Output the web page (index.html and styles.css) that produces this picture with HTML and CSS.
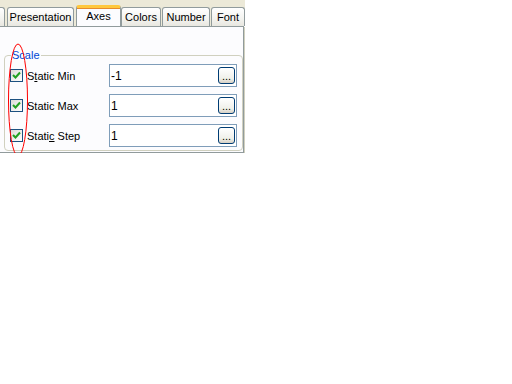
FILE: index.html
```html
<!DOCTYPE html>
<html lang="en">
<head>
    <meta charset="UTF-8">
    <title>Axes Properties</title>
    <link rel="stylesheet" href="styles.css">
</head>
<body>
    <div class="dialog">
        <div class="tab-strip">
            <div class="tab tab-cut"></div>
            <div class="tab tab-presentation">Presentation</div>
            <div class="tab tab-axes selected">Axes</div>
            <div class="tab tab-colors">Colors</div>
            <div class="tab tab-number">Number</div>
            <div class="tab tab-font">Font</div>
        </div>

        <div class="panel">
            <fieldset class="group">
                <legend>Scale</legend>

                <div class="row">
                    <span class="check"><svg width="11" height="11" viewBox="0 0 11 11"><path d="M2 5 L4.5 7.5 L9 2.5" fill="none" stroke="#21a121" stroke-width="2"/></svg></span>
                    <label>S<u>t</u>atic Min</label>
                    <div class="field"><span class="value">-1</span><button class="dots">...</button></div>
                </div>

                <div class="row">
                    <span class="check"><svg width="11" height="11" viewBox="0 0 11 11"><path d="M2 5 L4.5 7.5 L9 2.5" fill="none" stroke="#21a121" stroke-width="2"/></svg></span>
                    <label>Static Max</label>
                    <div class="field"><span class="value">1</span><button class="dots">...</button></div>
                </div>

                <div class="row">
                    <span class="check"><svg width="11" height="11" viewBox="0 0 11 11"><path d="M2 5 L4.5 7.5 L9 2.5" fill="none" stroke="#21a121" stroke-width="2"/></svg></span>
                    <label>Stati<u>c</u> Step</label>
                    <div class="field"><span class="value">1</span><button class="dots">...</button></div>
                </div>
            </fieldset>
        </div>

        <!-- red annotation ring drawn over the checkboxes -->
        <svg class="ring" width="22" height="114" viewBox="0 0 22 114">
            <ellipse cx="11" cy="57" rx="9.5" ry="56" fill="none" stroke="#ff0000" stroke-width="1"/>
        </svg>
    </div>
</body>
</html>
```

FILE: styles.css
```css
body {
    margin: 0;
    background: #fff;
    font-family: 'Liberation Sans', Arial, sans-serif;
    font-size: 11px;
    color: #000;
}

.dialog {
    position: relative;
    width: 245px;
}

.tab-strip {
    display: flex;
    align-items: flex-end;
    height: 26px;
    background: #ece9d8;
    overflow: hidden;
}

.tab {
    box-sizing: border-box;
    height: 19px;
    border: 1px solid #919b9c;
    border-bottom: none;
    border-radius: 3px 3px 0 0;
    background: linear-gradient(#ffffff, #f3f3ef 60%, #e8e7e0);
    text-align: center;
    line-height: 18px;
    white-space: nowrap;
}

.tab-cut { width: 5px; border-left: none; border-radius: 0 3px 0 0; }
.tab-presentation { width: 67px; margin-left: 2px; }
.tab-axes { width: 45px; margin-left: 2px; }
.tab-colors { width: 40px; }
.tab-number { width: 48px; margin-left: 1px; }
.tab-font { width: 34px; margin-left: 1px; }

.tab.selected {
    height: 22px;
    margin-bottom: -1px;
    border-top: 3px solid #ffc83c;
    background: #fcfcfe;
    line-height: 16px;
    position: relative;
    z-index: 1;
    box-shadow: inset 0 1px 0 #e68b2c;
}

.panel {
    box-sizing: border-box;
    width: 244px;
    height: 127px;
    padding: 22px 1px 0 4px;
    background: #fcfcfe;
    border-top: 1px solid #919b9c;
    border-right: 1px solid #919b9c;
    border-bottom: 1px solid #919b9c;
    box-shadow: 1px 1px 0 #d0d0bf;
}

.group {
    box-sizing: border-box;
    width: 239px;
    height: 102px;
    margin: 0;
    padding: 2px 4px 0 5px;
    border: 1px solid #d0d0bf;
    border-radius: 4px;
    display: flex;
    flex-direction: column;
    gap: 7px;
}

.group legend {
    padding: 0 1px;
    margin-left: 1px;
    color: #0046d5;
    line-height: 13px;
}

.row {
    display: flex;
    align-items: center;
    height: 23px;
}

.check {
    box-sizing: border-box;
    width: 13px;
    height: 13px;
    border: 1px solid #1c5180;
    background: linear-gradient(135deg, #dcdcd7, #ffffff);
    display: flex;
}

.row label {
    width: 82px;
    padding-left: 4px;
}

.field {
    box-sizing: border-box;
    width: 128px;
    height: 23px;
    border: 1px solid #7f9db9;
    background: #fff;
    display: flex;
    align-items: center;
    justify-content: space-between;
    padding: 0 1px 0 1px;
}

.value {
    font-size: 12px;
}

.dots {
    box-sizing: border-box;
    width: 17px;
    height: 17px;
    padding: 0;
    border: 1px solid #003c74;
    border-radius: 3px;
    background: linear-gradient(#ffffff, #f0f0ea 70%, #d6d0c5);
    font-family: 'Liberation Sans', Arial, sans-serif;
    font-size: 11px;
    line-height: 17px;
    color: #000;
}

.ring {
    position: absolute;
    left: 7px;
    top: 43px;
}
```
